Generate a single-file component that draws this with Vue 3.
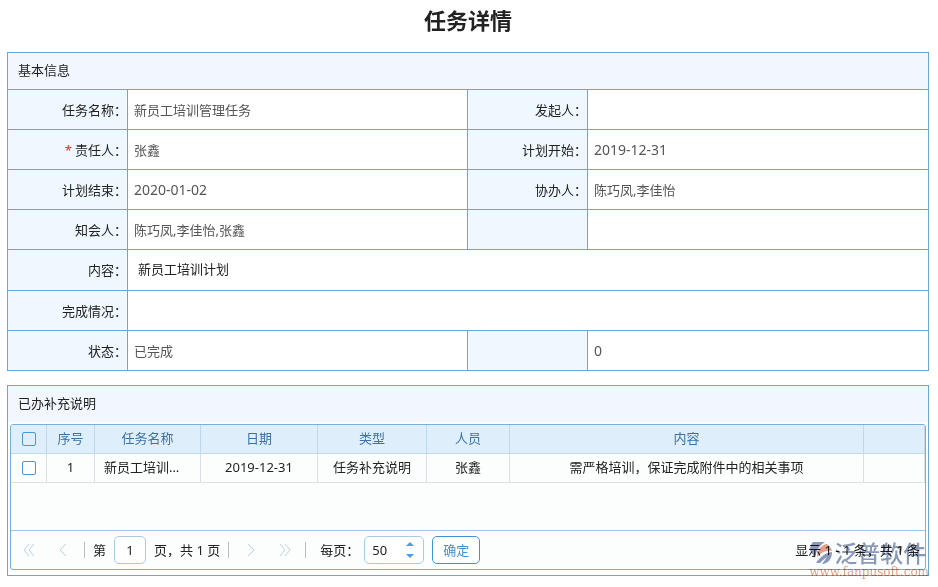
<script setup>
import { ref } from 'vue'

const basicRows = [
  [
    { label: '任务名称：', value: '新员工培训管理任务' },
    { label: '发起人：', value: '' },
  ],
  [
    { label: '责任人：', value: '张鑫', required: true },
    { label: '计划开始：', value: '2019-12-31', numeric: true },
  ],
  [
    { label: '计划结束：', value: '2020-01-02', numeric: true },
    { label: '协办人：', value: '陈巧凤,李佳怡' },
  ],
  [
    { label: '知会人：', value: '陈巧凤,李佳怡,张鑫' },
    { label: '', value: '' },
  ],
  [{ label: '内容：', value: '新员工培训计划', wide: true, rich: true }],
  [{ label: '完成情况：', value: '', wide: true }],
  [
    { label: '状态：', value: '已完成' },
    { label: '', value: '0', numeric: true },
  ],
]

const headers = ['序号', '任务名称', '日期', '类型', '人员', '内容', '']
const records = [
  ['1', '新员工培训…', '2019-12-31', '任务补充说明', '张鑫', '需严格培训，保证完成附件中的相关事项', ''],
]

const allChecked = ref(false)
const checked = ref([])
const page = ref('1')
const pageSize = ref('50')

function step(delta) {
  pageSize.value = String(Math.max(1, Number(pageSize.value) + delta))
}
function toggleAll() {
  checked.value = allChecked.value ? records.map((_, i) => i) : []
}
</script>

<template>
  <main class="page">
    <h1 class="title">任务详情</h1>

    <section class="panel">
      <h2 class="panel-head">基本信息</h2>
      <table class="form">
        <colgroup>
          <col class="col-label" /><col /><col class="col-label" /><col />
        </colgroup>
        <tbody>
          <tr v-for="(row, r) in basicRows" :key="r">
            <template v-for="(f, c) in row" :key="c">
              <th scope="row"><span v-if="f.required" class="star">*</span>{{ f.label }}</th>
              <td :colspan="f.wide ? 3 : 1" :class="{ numeric: f.numeric, rich: f.rich }">{{ f.value }}</td>
            </template>
          </tr>
        </tbody>
      </table>
    </section>

    <section class="panel records">
      <h2 class="panel-head">已办补充说明</h2>
      <div class="grid-box">
        <div class="grid-body">
          <table class="grid">
            <colgroup>
              <col class="c-check" /><col class="c-no" /><col class="c-name" /><col class="c-date" />
              <col class="c-type" /><col class="c-person" /><col /><col class="c-tail" />
            </colgroup>
            <thead>
              <tr>
                <th><input v-model="allChecked" type="checkbox" aria-label="全选" @change="toggleAll" /></th>
                <th v-for="(h, i) in headers" :key="i">{{ h }}</th>
              </tr>
            </thead>
            <tbody>
              <tr v-for="(rec, i) in records" :key="i">
                <td><input v-model="checked" type="checkbox" :value="i" aria-label="选择" /></td>
                <td v-for="(cell, j) in rec" :key="j" :class="{ clipped: j === 1 }">{{ cell }}</td>
              </tr>
            </tbody>
          </table>
        </div>
        <nav class="pager">
          <button class="arrow" type="button" aria-label="首页">
            <svg width="12" height="14" viewBox="0 0 12 14"><path d="M6 1 1 7l5 6M11 1 6 7l5 6" /></svg>
          </button>
          <button class="arrow prev" type="button" aria-label="上一页">
            <svg width="8" height="14" viewBox="0 0 8 14"><path d="M7 1 1 7l6 6" /></svg>
          </button>
          <i class="bar"></i>
          <label class="first" for="page-no">第</label>
          <input id="page-no" v-model="page" class="page-no" type="text" />
          <span class="total">页，共 1 页</span>
          <i class="bar"></i>
          <button class="arrow next" type="button" aria-label="下一页">
            <svg width="8" height="14" viewBox="0 0 8 14"><path d="M1 1l6 6-6 6" /></svg>
          </button>
          <button class="arrow last" type="button" aria-label="末页">
            <svg width="12" height="14" viewBox="0 0 12 14"><path d="M1 1l5 6-5 6M6 1l5 6-5 6" /></svg>
          </button>
          <i class="bar"></i>
          <label class="per" for="page-size">每页：</label>
          <span class="spinner">
            <input id="page-size" v-model="pageSize" type="text" />
            <span class="steps">
              <button type="button" aria-label="增加" @click="step(1)">
                <svg width="8" height="4" viewBox="0 0 8 4"><path d="M0 4 4 0l4 4z" /></svg>
              </button>
              <button type="button" aria-label="减少" @click="step(-1)">
                <svg width="8" height="4" viewBox="0 0 8 4"><path d="M0 0h8L4 4z" /></svg>
              </button>
            </span>
          </span>
          <button class="ok" type="button">确定</button>
          <span class="summary">显示 1 - 1 条，共 1 条</span>
        </nav>
      </div>

      <div class="mark">
        <div class="mark-top">
          <svg width="24" height="24" viewBox="0 0 24 24">
            <path class="blue" d="M4 1h12C11 4 7 9 6 17 4 14 3 12 1 9 1 6 2 3 4 1z" />
            <path class="red" d="M8 16C8 9 12 4 18 3c3 2 4 4 5 7-6-1-10 1-15 6z" />
            <path class="blue" d="M7 22c4-6 9-10 16-11 0 7-4 12-10 12l5-7c-3 2-5 4-7 6z" />
          </svg>
          <span class="mark-name">泛普软件</span>
        </div>
        <span class="mark-url">www.fanpusoft.com</span>
      </div>
    </section>
  </main>
</template>

<style>
body {
  margin: 0;
  background: #fff;
}
</style>

<style scoped>
.page {
  padding: 0 9px 11px 7px;
  font: 13px/20px "Noto Sans", "Noto Sans CJK SC", sans-serif;
  color: #222;
}
.title {
  margin: 0;
  height: 52px;
  font-size: 22px;
  line-height: 40px;
  font-weight: 700;
  text-align: center;
}
.panel {
  border: 1px solid #6ca6d6;
}
.panel-head {
  margin: 0;
  padding: 0 10px 2px;
  font-size: 13px;
  line-height: 34px;
  font-weight: 400;
  background: #f2f6ff;
}
table {
  width: 100%;
  border-collapse: separate;
  border-spacing: 0;
  table-layout: fixed;
}
.col-label {
  width: 120px;
}
.form th,
.form td {
  box-sizing: border-box;
  height: 40px;
  padding: 0;
  border: 0 solid #6ca6d6;
  border-width: 1px 1px 0 0;
  font-weight: 400;
}
.form tr > :last-child {
  border-right: 0;
}
.form th {
  background: #f0f8ff;
  text-align: right;
}
.form td {
  padding-left: 6px;
  color: #555;
}
.form td.numeric {
  font-size: 14px;
}
.form td.rich {
  height: 41px;
  padding: 0 10px 2px;
  color: #222;
}
.star {
  margin-right: 3px;
  color: #f22;
}
.records {
  position: relative;
  margin-top: 14px;
}
.grid-box {
  margin: 2px 2px 5px;
  border: 1px solid #73b1e3;
  border-radius: 3px;
  background: #fcfefe;
  overflow: hidden;
}
.grid-body {
  height: 105px;
}
.grid th,
.grid td {
  box-sizing: border-box;
  height: 29px;
  padding: 0 9px 2px;
  border: 0 solid #dde0e3;
  border-width: 0 1px 1px 0;
  font-weight: 400;
  text-align: center;
  white-space: nowrap;
  overflow: hidden;
  text-overflow: ellipsis;
}
.grid td.clipped {
  text-align: left;
}
.grid th {
  background: #dfeefb;
  border-color: #c0d8ec;
  color: #3b73a5;
}
.c-check {
  width: 36px;
}
.c-no {
  width: 48px;
}
.c-name {
  width: 106px;
}
.c-date {
  width: 117px;
}
.c-type {
  width: 109px;
}
.c-person {
  width: 83px;
}
.c-tail {
  width: 61px;
}
input[type="checkbox"] {
  appearance: none;
  display: block;
  box-sizing: border-box;
  width: 14px;
  height: 14px;
  margin: 0 auto;
  border: 1px solid #4a97d6;
  border-radius: 2px;
}
input[type="checkbox"]:checked {
  background: #4a97d6;
}
.grid th:first-child,
.grid td:first-child {
  padding: 0;
}
.pager {
  display: flex;
  align-items: center;
  height: 38px;
  padding: 0 5px 0 12px;
  border-top: 1px solid #9cc5e6;
}
.pager button {
  padding: 0;
  border: 0;
  background: none;
  font: inherit;
}
.arrow {
  display: flex;
}
.arrow svg {
  fill: none;
  stroke: #b5d1ee;
}
.prev {
  margin: 0 17px 0 24px;
}
.next {
  margin-left: 18px;
}
.last {
  margin: 0 14px 0 24px;
}
.bar {
  width: 1px;
  height: 16px;
  background: #bbb;
}
.first {
  margin: 0 8px;
}
.total {
  margin: 0 8px;
}
.per {
  margin-left: 14px;
}
.page-no,
.spinner {
  box-sizing: border-box;
  height: 28px;
  border: 1px solid #a5cbea;
  border-radius: 5px;
  background: #fff;
}
.page-no {
  width: 32px;
  padding: 0;
  font: inherit;
  color: inherit;
  text-align: center;
}
.spinner {
  display: flex;
  align-items: center;
  width: 60px;
  margin: 0 8px 0 5px;
  padding: 0 9px 0 7px;
}
.spinner input {
  flex: 1;
  min-width: 0;
  padding: 0;
  border: 0;
  background: none;
  font: inherit;
  color: inherit;
}
.steps {
  display: grid;
  gap: 8px;
}
.steps button {
  display: flex;
}
.steps svg {
  fill: #4a9be0;
}
.pager .ok {
  box-sizing: border-box;
  width: 48px;
  height: 28px;
  border: 1px solid #3e92d6;
  border-radius: 5px;
  background: #fff;
  color: #3e92d6;
}
.summary {
  margin-left: auto;
}
.mark {
  position: absolute;
  right: -1px;
  bottom: -3px;
  mix-blend-mode: multiply;
  pointer-events: none;
}
.mark-top {
  display: flex;
  align-items: center;
  gap: 1px;
}
.mark-name {
  font-size: 23px;
  line-height: 26px;
  font-weight: 500;
  color: #8c99bb;
}
.mark-url {
  display: block;
  font: 12px/12px "DejaVu Serif", serif;
  color: #e6a18d;
}
.blue {
  fill: #8c99bb;
}
.red {
  fill: #e6a18d;
}
</style>
